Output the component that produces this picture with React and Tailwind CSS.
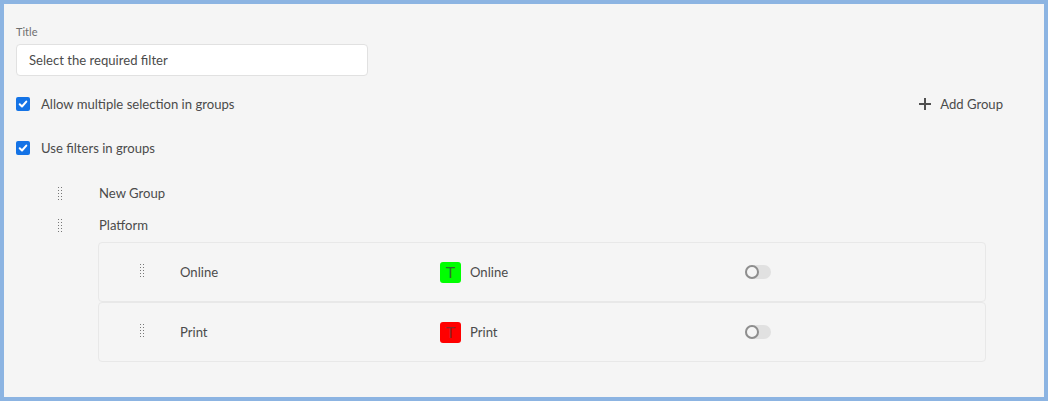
const font = { fontFamily: '"Lato", "Liberation Sans", sans-serif' };

function Check() {
  return (
    <span className="flex h-[14px] w-[14px] shrink-0 items-center justify-center rounded-[2px] bg-[#1473e6]">
      <svg width="10" height="10" viewBox="0 0 10 10" fill="none">
        <path d="M1.7 5.2 4 7.5 8.3 2.6" stroke="#fff" strokeWidth="2" strokeLinecap="round" strokeLinejoin="round" />
      </svg>
    </span>
  );
}

function Grip() {
  return (
    <svg width="6" height="13" viewBox="0 0 6 13" className="block">
      {[0, 1, 2, 3, 4].map((i) => (
        <g key={i} fill="#777777">
          <rect x="1" y={i * 3} width="1" height="1" />
          <rect x="4" y={i * 3} width="1" height="1" />
        </g>
      ))}
    </svg>
  );
}

function Toggle() {
  return (
    <span className="relative block h-[14px] w-[26px] rounded-full bg-[#e1e1e1]">
      <span className="absolute left-0 top-0 h-[14px] w-[14px] rounded-full border-2 border-[#8e8e8e] bg-[#f5f5f5]" />
    </span>
  );
}

function Row({ name, color, tcolor, className }) {
  return (
    <div className={`flex items-center rounded-[4px] border border-[#e8e8e8] ${className}`}>
      <div className="ml-[40px] w-[41px]"><div className="-translate-y-[2px]"><Grip /></div></div>
      <div className="w-[260px]">{name}</div>
      <div className="flex w-[305px] items-center gap-[9px]">
        <span className={`flex h-[21px] w-[21px] items-center justify-center rounded-[3px] text-[16px] leading-none ${color} ${tcolor}`}>T</span>
        <span>{name}</span>
      </div>
      <Toggle />
    </div>
  );
}

export default function App() {
  return (
    <div style={font} className="h-[401px] w-[1048px] border-4 border-[#8cb4e2] bg-[#f5f5f5] text-[13.1px] leading-[18px] text-[#4b4b4b]">
      <div className="pl-[12px] pr-[41px] pt-[19px]">
        <div className="text-[11px] leading-[18px] text-[#6e6e6e]">Title</div>
        <div className="mt-[3px] flex h-[32px] w-[352px] items-center rounded-[4px] border border-[#e1e1e1] bg-white pl-[12px]">
          Select the required filter
        </div>
        <div className="mt-[19px] flex h-[18px] items-center">
          <Check />
          <span className="ml-[11px]">Allow multiple selection in groups</span>
          <span className="ml-auto flex items-center">
            <svg width="12" height="12" viewBox="0 0 12 12" fill="none">
              <path d="M6 0v12M0 6h12" stroke="#505050" strokeWidth="2" />
            </svg>
            <span className="ml-[9px]">Add Group</span>
          </span>
        </div>
        <div className="mt-[26px] flex h-[18px] items-center">
          <Check />
          <span className="ml-[11px]">Use filters in groups</span>
        </div>
        <div className="mt-[27px] flex h-[18px] items-center">
          <div className="ml-[41px] w-[42px]"><Grip /></div>
          <span>New Group</span>
        </div>
        <div className="mt-[14px] flex h-[18px] items-center">
          <div className="ml-[41px] w-[42px]"><Grip /></div>
          <span>Platform</span>
        </div>
        <div className="ml-[82px] mt-[8px] w-[888px]">
          <Row name="Online" color="bg-[#00ff00]" tcolor="text-[#2f6b2f]" className="h-[60px]" />
          <Row name="Print" color="bg-[#ff0000]" tcolor="text-[#8a2a2a]" className="h-[60px]" />
        </div>
      </div>
    </div>
  );
}
